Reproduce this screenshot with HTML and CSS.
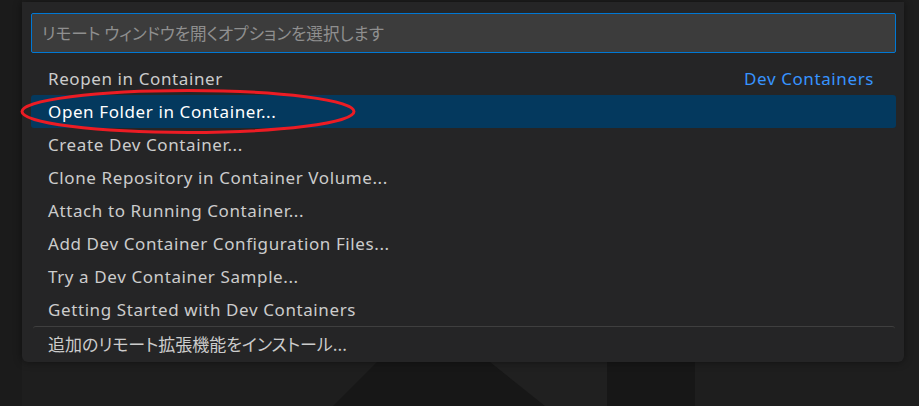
FILE: index.html
```html
<!DOCTYPE html>
<html lang="ja">
<head>
<meta charset="utf-8">
<title>Remote window options</title>
<link rel="stylesheet" href="styles.css">
</head>
<body>
<svg class="backdrop" width="919" height="406" viewBox="0 0 919 406" aria-hidden="true">
  <rect x="0" y="0" width="919" height="406" fill="#1e1e1e"/>
  <rect x="0" y="0" width="22" height="406" fill="#1b1b1b"/>
  <rect x="490" y="362" width="117" height="44" fill="#202020"/>
  <polygon points="377,362 490,362 545,406 333,406" fill="#171717"/>
  <rect x="607" y="362" width="88" height="44" fill="#171717"/>
</svg>

<div class="quick-input">
  <div class="filter">
    <div class="filter-box">
      <span class="placeholder">リモート ウィンドウを開くオプションを選択します</span>
    </div>
  </div>
  <ul class="list">
    <li class="row"><span class="label">Reopen in Container</span><span class="group">Dev Containers</span></li>
    <li class="row selected"><span class="label">Open Folder in Container...</span></li>
    <li class="row"><span class="label">Create Dev Container...</span></li>
    <li class="row"><span class="label">Clone Repository in Container Volume...</span></li>
    <li class="row"><span class="label">Attach to Running Container...</span></li>
    <li class="row"><span class="label">Add Dev Container Configuration Files...</span></li>
    <li class="row"><span class="label">Try a Dev Container Sample...</span></li>
    <li class="row"><span class="label">Getting Started with Dev Containers</span></li>
    <li class="row separated"><span class="label jp">追加のリモート拡張機能をインストール...</span></li>
  </ul>
</div>

<svg class="annotation" width="919" height="406" viewBox="0 0 919 406" aria-hidden="true">
  <ellipse cx="188" cy="111.5" rx="166" ry="21" fill="none" stroke="#ec1c24" stroke-width="3"/>
</svg>
</body>
</html>
```

FILE: styles.css
```css
html, body {
  margin: 0;
  padding: 0;
  width: 919px;
  height: 406px;
  overflow: hidden;
  background: #1e1e1e;
}

body {
  position: relative;
  font-family: "Noto Sans", "Noto Sans CJK JP", sans-serif;
}

.backdrop {
  position: absolute;
  left: 0;
  top: 0;
  z-index: 0;
}

.annotation {
  position: absolute;
  left: 0;
  top: 0;
  z-index: 3;
  pointer-events: none;
}

.quick-input {
  position: relative;
  z-index: 1;
  margin: 2px 0 0 22px;
  width: 882px;
  box-sizing: border-box;
  padding: 11px 8px 2px 9px;
  background: #252526;
  border-radius: 0 0 6px 6px;
  box-shadow: 0 0 8px rgba(0, 0, 0, 0.45);
}

.filter-box {
  height: 40px;
  box-sizing: border-box;
  border: 1px solid #0078d4;
  border-radius: 2px;
  background: #3c3c3c;
  display: flex;
  align-items: center;
  padding-left: 10px;
}

.placeholder {
  color: #8f8f8f;
  font-family: "Noto Sans CJK JP", sans-serif;
  font-feature-settings: "palt";
  font-size: 16.6px;
}

.list {
  list-style: none;
  margin: 9px 0 0;
  padding: 0;
}

.row {
  height: 33px;
  display: flex;
  align-items: center;
  justify-content: space-between;
  padding: 0 22px 0 17px;
  color: #cccccc;
  font-size: 17px;
  letter-spacing: 0.6px;
  border-radius: 3px;
}

.row.selected {
  background: #04395e;
  color: #ffffff;
}

.row.separated {
  margin: 0 1px 0 2px;
  padding-left: 15px;
  border-top: 1px solid #3f3f3f;
}

.group {
  color: #3794ff;
}

.jp {
  font-family: "Noto Sans CJK JP", sans-serif;
  font-feature-settings: "palt";
  letter-spacing: 0;
}
```
